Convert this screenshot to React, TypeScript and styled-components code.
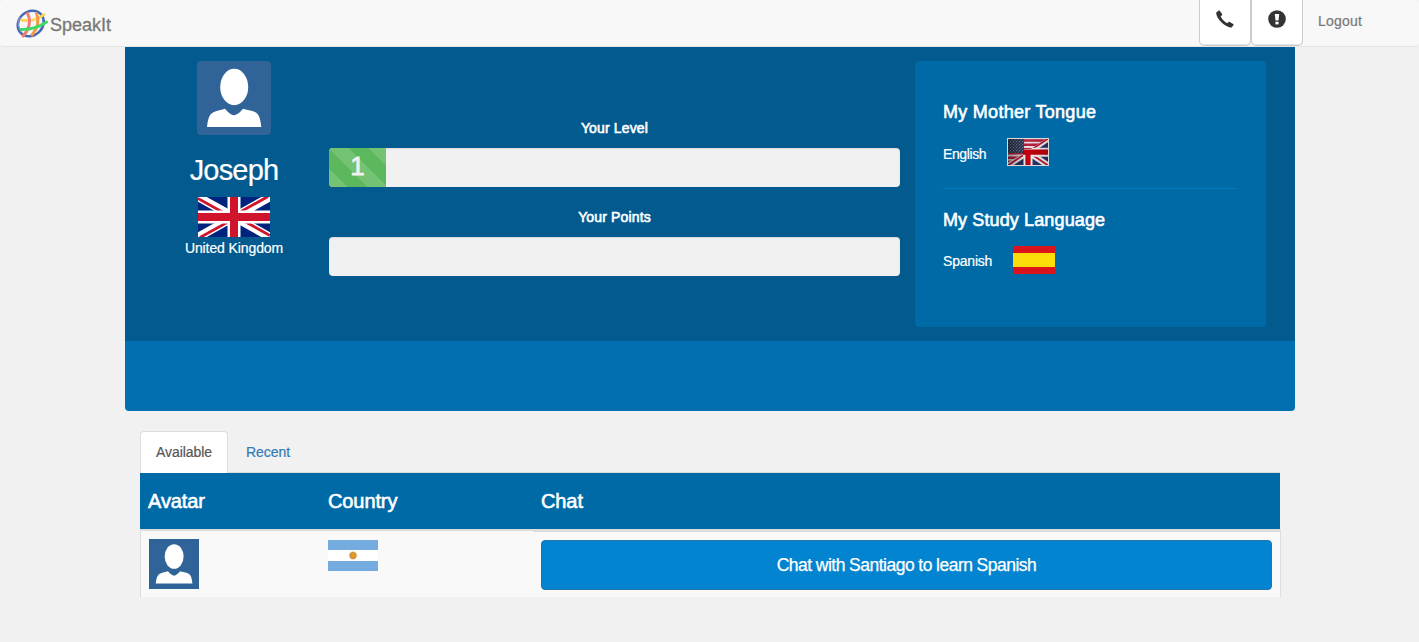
import React from "react";
import styled, { createGlobalStyle } from "styled-components";

const GlobalStyle = createGlobalStyle`
  *, *::before, *::after { box-sizing: border-box; }
  body {
    margin: 0;
    background: #f1f1f1;
    color: #fff;
    font-family: "Liberation Sans", Arial, sans-serif;
    font-size: 14px;
    line-height: 20px;
  }
  svg { display: block; }
  h2, h3, h4, p { margin: 0; }
`;

const Navbar = styled.header`
  display: flex;
  justify-content: space-between;
  height: 47px;
  background: #f8f8f8;
  border-bottom: 1px solid #e5e5e5;
  border-radius: 4px;
`;

const Brand = styled.a`
  display: flex;
  gap: 2px;
  padding: 8px 0 0 15px;
  color: #777;
  font-size: 18px;
  line-height: 34px;
  -webkit-text-stroke: 0.3px #777;
`;

const NavActions = styled.nav`
  display: flex;
  padding-right: 57px;
`;

const IconButton = styled.button`
  display: flex;
  justify-content: center;
  width: 52px;
  height: 46px;
  padding: 10px 0 0;
  border: 1px solid #ccc;
  border-top: 0;
  border-radius: 0 0 5px 5px;
  background: #fff;
  box-shadow: inset 0 -1px 0 #e4e4e4;
`;

const Logout = styled.a`
  padding: 11px 0 0 15px;
  letter-spacing: 0.2px;
  color: #777;
  -webkit-text-stroke: 0.2px #777;
`;

const Profile = styled.section`
  width: 1170px;
  margin: 0 auto 20px 125px;
  border-radius: 0 0 4px 4px;
  overflow: hidden;
  background: #0270b0;
  padding-bottom: 70px;
`;

const ProfileTop = styled.div`
  display: flex;
  height: 294px;
  padding: 14px 29px 14px 30px;
  background: #025a8f;
`;

const Person = styled.div`
  display: flex;
  flex-direction: column;
  align-items: center;
  width: 158px;
`;

const PersonName = styled.h2`
  margin: 19px 0 10px;
  font-size: 29px;
  font-weight: 400;
  line-height: 33px;
  letter-spacing: -0.8px;
  -webkit-text-stroke: 0.2px #fff;
`;

const Place = styled.p`
  margin-top: 1px;
  letter-spacing: -0.1px;
  -webkit-text-stroke: 0.2px #fff;
`;

const Progress = styled.div`
  width: 571px;
  margin: 0 15px 0 16px;
  padding-top: 57px;
`;

const MeterLabel = styled.h4`
  height: 30px;
  font-size: 14px;
  font-weight: 400;
  line-height: 20px;
  letter-spacing: 0.15px;
  text-align: center;
  -webkit-text-stroke: 0.6px #fff;
`;

const Meter = styled.div`
  height: 39px;
  margin-bottom: 20px;
  border-radius: 4px;
  overflow: hidden;
  background: #f1f1f1;
  box-shadow: inset 0 1px 2px rgba(0, 0, 0, 0.1);
`;

const MeterFill = styled.div`
  width: 10%;
  height: 39px;
  background-color: #5cb85c;
  background-image: linear-gradient(
    45deg,
    rgba(255, 255, 255, 0.15) 25%,
    transparent 25%,
    transparent 50%,
    rgba(255, 255, 255, 0.15) 50%,
    rgba(255, 255, 255, 0.15) 75%,
    transparent 75%,
    transparent
  );
  background-size: 40px 40px;
  color: #f1f1f1;
  font-size: 26px;
  line-height: 36px;
  text-align: center;
  -webkit-text-stroke: 0.8px #f1f1f1;
`;

const Languages = styled.aside`
  width: 351px;
  height: 266px;
  padding: 40px 28px 0;
  border-radius: 4px;
  background: #006aa7;
`;

const LanguageBlock = styled.div<{ $divided?: boolean }>`
  height: ${(p) => (p.$divided ? "88px" : "auto")};
  margin-bottom: 20px;
  border-bottom: ${(p) => (p.$divided ? "1px solid #0278bd" : "0")};
`;

const LanguageTitle = styled.h3<{ $spacing: number }>`
  font-size: 18px;
  font-weight: 400;
  line-height: 22px;
  letter-spacing: ${(p) => p.$spacing}px;
  -webkit-text-stroke: 0.6px #fff;
`;

const LanguageRow = styled.div`
  display: flex;
  gap: 21px;
  margin-top: 15px;
`;

const LanguageName = styled.span<{ $tight?: boolean }>`
  padding-top: ${(p) => (p.$tight ? "6px" : "5px")};
  letter-spacing: ${(p) => (p.$tight ? "-0.38px" : "-0.2px")};
  -webkit-text-stroke: 0.2px #fff;
`;

const Partners = styled.section`
  width: 1141px;
  margin-left: 140px;
`;

const Tabs = styled.div`
  display: flex;
  gap: 2px;
  width: 1140px;
  height: 42px;
  border-bottom: 1px solid #ddd;
`;

const Tab = styled.a<{ $active?: boolean }>`
  width: 88px;
  height: 42px;
  padding: 10px 15px 0;
  border: 1px solid ${(p) => (p.$active ? "#ddd" : "transparent")};
  border-bottom: 0;
  border-radius: 4px 4px 0 0;
  background: ${(p) => (p.$active ? "#fff" : "transparent")};
  color: ${(p) => (p.$active ? "#555" : "#337ab7")};
  letter-spacing: -0.05px;
  -webkit-text-stroke: 0.2px currentColor;
`;

const Table = styled.table`
  width: 1141px;
  border-collapse: separate;
  border-spacing: 0;
  table-layout: fixed;
`;

const HeadRow = styled.tr`
  background: linear-gradient(to right, #006aa7 1140px, transparent 1140px);
`;

const HeadCell = styled.th<{ $width?: number }>`
  width: ${(p) => (p.$width ? `${p.$width}px` : "auto")};
  height: 56px;
  padding: 0 8px;
  font-size: 20px;
  font-weight: 400;
  text-align: left;
  letter-spacing: -0.1px;
  -webkit-text-stroke: 0.6px #fff;
`;

const Cell = styled.td<{ $last?: boolean; $first?: boolean }>`
  height: 68px;
  padding: ${(p) => (p.$last ? "8px 8px 7px" : p.$first ? "8px" : "9px 8px")};
  vertical-align: top;
  background: #f9f9f9;
  border-top: ${(p) => (p.$last ? 3 : 2)}px solid #ddd;
  border-left: ${(p) => (p.$first ? "1px solid #ddd" : "0")};
  border-right: ${(p) => (p.$last ? "1px solid #ddd" : "0")};
`;

const ChatButton = styled.button`
  display: block;
  width: 731px;
  height: 50px;
  padding: 0;
  border: 1px solid #2474ad;
  border-radius: 4px;
  background: #0284d0;
  color: #fff;
  font: 400 17.5px "Liberation Sans", Arial, sans-serif;
  letter-spacing: -0.5px;
  word-spacing: -0.2px;
  -webkit-text-stroke: 0.25px #fff;
`;

const Logo = () => (
  <svg width="33" height="32" viewBox="0 0 33 32" fill="none" strokeLinecap="round">
    <ellipse cx="15.700" cy="15.500" rx="13.800" ry="11.900" stroke="#4668b5" strokeWidth="2.600" transform="rotate(-42 15.700 15.500)" />
    <path d="M4.500 9.500C2.800 14 3 19 6 23" stroke="#7890cc" strokeWidth="1.500" />
    <path d="M6.500 12C15 13.500 23 11.500 29 6.500" stroke="#ffd65c" strokeWidth="2.800" />
    <path d="M12.500 5.500C16.500 13 14 22 8 28" stroke="#f47b70" strokeWidth="2.900" />
    <path d="M21.500 5.500C24.500 13 22 21 17 27" stroke="#f99642" strokeWidth="2.900" />
    <path d="M6 21.500C15 22 24 19 31.500 14" stroke="#3fda66" strokeWidth="2.900" />
  </svg>
);

const PhoneIcon = () => (
  <svg width="18" height="18" viewBox="0 0 18 18" fill="#333">
    <path d="M.6 2.300 2.500.7C3 .3 3.400.4 3.800.8L6 4C6.400 4.600 6.200 5.100 5.700 5.500L4.700 6.300C5.400 8.700 8.900 12.300 11.400 13.200L12.200 12.200C12.600 11.700 13 11.500 13.700 11.900L17.200 14C17.700 14.300 17.800 14.800 17.400 15.300L16 17C15.500 17.500 14.800 17.600 14 17.400C7.500 16 .9 8.800.2 3.600C.1 3 .1 2.700.6 2.300Z" />
  </svg>
);

const AlertIcon = () => (
  <svg width="18" height="18" viewBox="0 0 18 18">
    <circle cx="9" cy="9" r="8.800" fill="#333" />
    <path d="M6.800 4H11.200L10.500 10.600H7.500Z" fill="#fff" />
    <rect x="7.400" y="11.700" width="3.200" height="2.700" fill="#fff" />
  </svg>
);

const Avatar = ({ size, radius = 0 }: { size: number; radius?: number }) => (
  <svg width={size} height={size} viewBox="0 0 74 74">
    <rect width="74" height="74" rx={radius} fill="#306498" />
    <ellipse cx="37.200" cy="26" rx="14" ry="18.200" fill="#fff" />
    <path d="M10 66C11 58 12 53 17 51C20 49.500 25 49 28 47.800C30 50 33.500 54 37 54.300C40 54 44 50.500 46 47.800C49 49 55 49.500 58 51C62.500 53 63.500 59 64.300 66Z" fill="#fff" />
  </svg>
);

const UnionJack = () => (
  <svg width="72" height="40" viewBox="0 0 72 40">
    <rect width="72" height="40" fill="#00247d" />
    <path d="M0 0 72 40M72 0 0 40" stroke="#fff" strokeWidth="8.500" />
    <path d="M0 1.500 36 21.500M72 38.500 36 18.500M70 -.5 36 18.400M2 40.500 36 21.600" stroke="#cf142b" strokeWidth="2.800" />
    <path d="M36 0V40M0 20H72" stroke="#fff" strokeWidth="13" />
    <path d="M36 0V40M0 20H72" stroke="#cf142b" strokeWidth="8" />
  </svg>
);

const EnglishFlag = () => (
  <svg width="42" height="28" viewBox="0 0 42 28">
    <defs>
      <linearGradient id="flagShade" x1="0" y1="0" x2="1" y2="0">
        <stop offset="0" stopColor="#000" stopOpacity="0.4" />
        <stop offset="0.5" stopColor="#000" stopOpacity="0" />
        <stop offset="1" stopColor="#000" stopOpacity="0.15" />
      </linearGradient>
      <pattern id="flagStars" width="3" height="3" patternUnits="userSpaceOnUse">
        <rect width="3" height="3" fill="#26304f" />
        <rect width="1.200" height="1.200" fill="#8088a0" />
        <rect x="1.500" y="1.500" width="1.200" height="1.200" fill="#8088a0" />
      </pattern>
      <clipPath id="flagHalf"><path d="M42 0V28H0V25L17 15.500V11H24L40 0Z" /></clipPath>
    </defs>
    <rect width="42" height="28" fill="#eadfe2" />
    <path d="M0 2.500H42M0 6.800H42M0 11.100H42M0 15.400H42M0 19.700H42M0 24H42" stroke="#b81f3c" strokeWidth="2.400" />
    <rect width="17" height="15" fill="url(#flagStars)" />
    <g clipPath="url(#flagHalf)">
      <rect width="42" height="28" fill="#2b3566" />
      <path d="M0 28 42 0M21 14 42 28" stroke="#f5f2f4" strokeWidth="6" />
      <path d="M0 28 42 0M21 14 42 28" stroke="#c51530" strokeWidth="1.800" />
      <path d="M16 14.200H42M21 12V28" stroke="#f5f2f4" strokeWidth="9" />
    </g>
    <path d="M16 14.200H42M21 12V28" stroke="#c4000e" strokeWidth="5.200" />
    <rect width="42" height="28" fill="url(#flagShade)" />
    <rect x="0.500" y="0.500" width="41" height="27" fill="none" stroke="#dfd6d7" />
  </svg>
);

const SpanishFlag = () => (
  <svg width="42" height="28" viewBox="0 0 42 28">
    <rect width="42" height="28" fill="#db141b" />
    <rect y="7" width="42" height="14" fill="#fcdd09" />
  </svg>
);

const ArgentineFlag = () => (
  <svg width="50" height="31" viewBox="0 0 50 31">
    <rect width="50" height="31" fill="#74acdf" />
    <rect y="10" width="50" height="11" fill="#fff" />
    <circle cx="25" cy="15.500" r="4.200" fill="#f4d39a" />
    <circle cx="25" cy="15.500" r="3" fill="#e89a20" stroke="#a9824f" strokeWidth="0.800" />
  </svg>
);

export default function App() {
  return (
    <>
      <GlobalStyle />
      <Navbar>
        <Brand>
          <Logo />
          SpeakIt
        </Brand>
        <NavActions>
          <IconButton aria-label="Call"><PhoneIcon /></IconButton>
          <IconButton aria-label="Alerts"><AlertIcon /></IconButton>
          <Logout>Logout</Logout>
        </NavActions>
      </Navbar>
      <Profile>
        <ProfileTop>
          <Person>
            <Avatar size={74} radius={4} />
            <PersonName>Joseph</PersonName>
            <UnionJack />
            <Place>United Kingdom</Place>
          </Person>
          <Progress>
            <MeterLabel>Your Level</MeterLabel>
            <Meter><MeterFill>1</MeterFill></Meter>
            <MeterLabel>Your Points</MeterLabel>
            <Meter />
          </Progress>
          <Languages>
            <LanguageBlock $divided>
              <LanguageTitle $spacing={0.28}>My Mother Tongue</LanguageTitle>
              <LanguageRow>
                <LanguageName $tight>English</LanguageName>
                <EnglishFlag />
              </LanguageRow>
            </LanguageBlock>
            <LanguageBlock>
              <LanguageTitle $spacing={0.12}>My Study Language</LanguageTitle>
              <LanguageRow>
                <LanguageName>Spanish</LanguageName>
                <SpanishFlag />
              </LanguageRow>
            </LanguageBlock>
          </Languages>
        </ProfileTop>
      </Profile>
      <Partners>
        <Tabs>
          <Tab $active>Available</Tab>
          <Tab>Recent</Tab>
        </Tabs>
        <Table>
          <thead>
            <HeadRow>
              <HeadCell $width={180}>Avatar</HeadCell>
              <HeadCell $width={213}>Country</HeadCell>
              <HeadCell>Chat</HeadCell>
            </HeadRow>
          </thead>
          <tbody>
            <tr>
              <Cell $first><Avatar size={50} /></Cell>
              <Cell><ArgentineFlag /></Cell>
              <Cell $last><ChatButton>Chat with Santiago to learn Spanish</ChatButton></Cell>
            </tr>
          </tbody>
        </Table>
      </Partners>
    </>
  );
}
